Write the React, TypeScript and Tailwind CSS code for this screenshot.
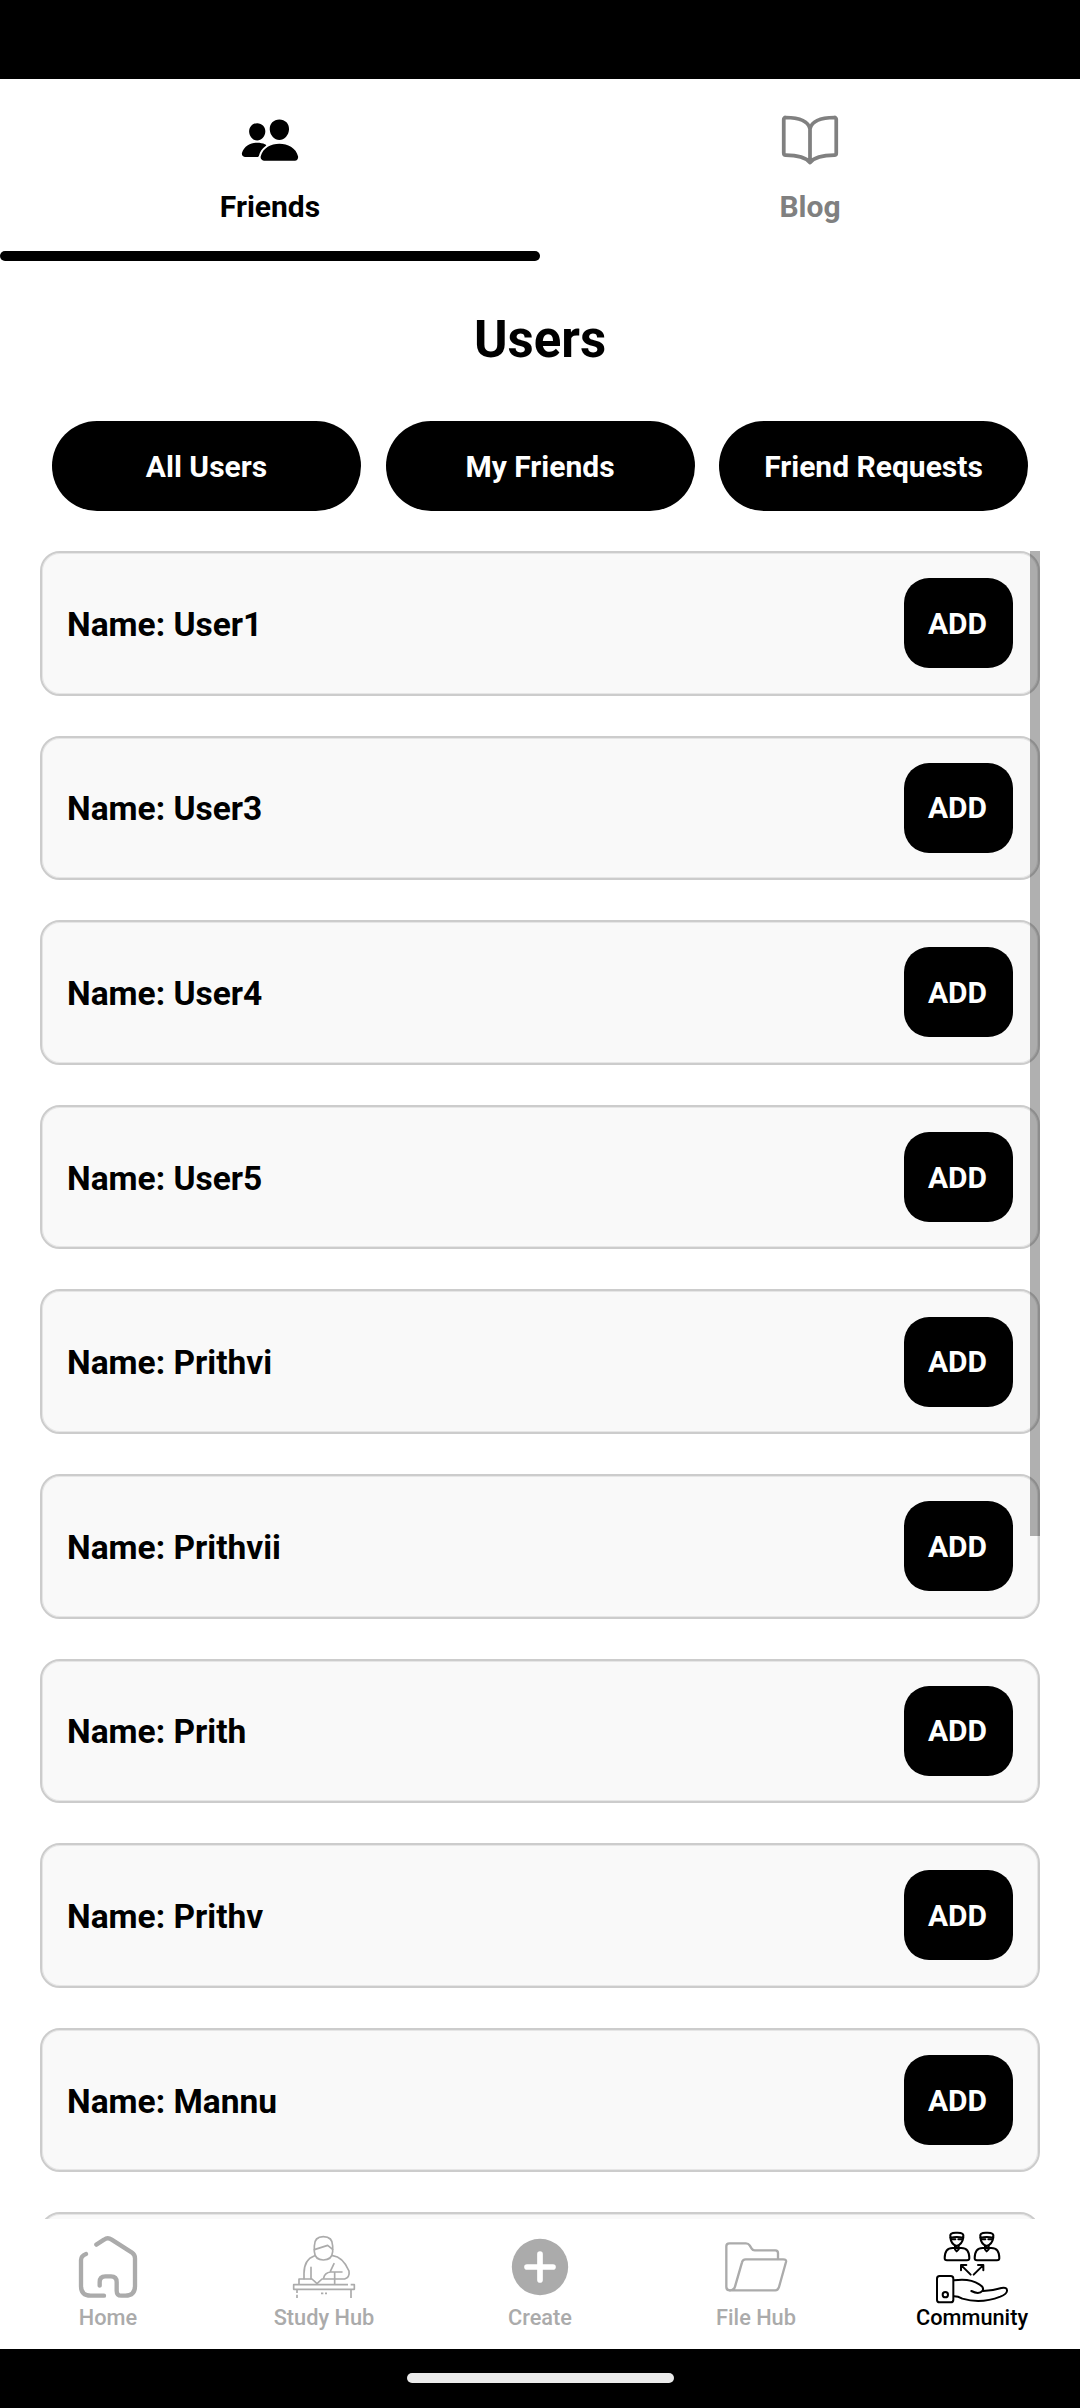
import React from "react";
import { IoBookOutline, IoPeople } from "react-icons/io5";

const users = [
    "User1",
    "User3",
    "User4",
    "User5",
    "Prithvi",
    "Prithvii",
    "Prith",
    "Prithv",
    "Mannu",
];

const filters = ["All Users", "My Friends", "Friend Requests"];

interface NavIconProps {
    viewBox: string;
    strokeWidth: number;
    children: React.ReactNode;
}

function NavIcon({ viewBox, strokeWidth, children }: NavIconProps) {
    return (
        <svg
            className="w-[90px] h-[84px]"
            viewBox={viewBox}
            fill="none"
            stroke="currentColor"
            strokeWidth={strokeWidth}
            strokeLinecap="round"
            strokeLinejoin="round"
        >
            {children}
        </svg>
    );
}

function HomeIcon() {
    return (
        <NavIcon viewBox="189 90 270 252" strokeWidth={13}>
            <path d="M289 164L312 149Q323 141 335 149L396 188Q405 194 405 205V288Q405 317 376 317H364Q350 317 350 302V276Q350 259 333 259H316Q299 259 299 276V287" />
            <path d="M258 192Q243 198 243 210V288Q243 317 272 317H312" />
        </NavIcon>
    );
}

function StudyIcon() {
    return (
        <NavIcon viewBox="837 90 270 252" strokeWidth={5}>
            <path d="M943 168Q943 140 970 140Q998 140 998 168V185Q996 210 970 210Q945 210 943 185Z" />
            <path d="M943 179L983 166L998 178" />
            <path d="M944 197Q912 208 912 250V266M933 232V266" />
            <path d="M998 197Q1028 200 1047 243Q1050 262 1034 267H966L951 281L936 267H897V281" />
            <path d="M1002 221L991 244M1026 246H992Q974 248 971 264M1004 246V281" />
            <path d="M1044 284H881V298H1063V284H1052" strokeLinecap="butt" />
            <path d="M891 300V309M891 314V324M1053 298V324M963 310H970M975 310H981" strokeLinecap="butt" />
        </NavIcon>
    );
}

function CreateIcon() {
    return (
        <NavIcon viewBox="285 90 270 252" strokeWidth={17}>
            <circle cx="420" cy="231" r="84.5" fill="currentColor" stroke="none" />
            <path d="M420 192V270M381 231H459" stroke="white" />
        </NavIcon>
    );
}

function FileIcon() {
    return (
        <NavIcon viewBox="933 90 270 252" strokeWidth={7}>
            <path d="M990 301Q979 301 979 291V169Q979 160 988 160H1038Q1045 160 1049 166L1055 176Q1058 181 1064 181H1126Q1134 181 1134 189V207" />
            <path d="M990 301Q1002 301 1005 290L1026 217Q1028 208 1037 208H1150Q1160 208 1158 216L1137 291Q1134 301 1126 301Z" />
        </NavIcon>
    );
}

function Person() {
    return (
        <>
            <path d="M512 143Q506 127 530 128Q555 127 549 143Q530 139 512 143Z" />
            <path d="M511 143Q513 163 530 168Q547 163 550 143M515 148H526M535 148H546" />
            <path d="M525 168V178L530 184L536 178V168" />
            <path d="M494 205Q494 174 518 174H544Q568 174 568 205Q568 211 561 211H501Q494 211 494 205Z" />
        </>
    );
}

function CommunityIcon() {
    return (
        <NavIcon viewBox="441 90 270 252" strokeWidth={6}>
            <Person />
            <g transform="translate(90 0)">
                <Person />
            </g>
            <path d="M572 254L544 226M543 241V225H559M581 254L609 226M594 225H610V241" />
            <rect x="471" y="258" width="49" height="79" rx="8" />
            <circle cx="496" cy="314" r="8" />
            <path d="M522 271Q569 264 598 283Q613 292 608 302Q597 315 574 303" />
            <path d="M609 303Q641 301 664 294Q682 290 681 303Q680 312 661 320Q602 343 547 326Q534 319 522 319" />
        </NavIcon>
    );
}

const navItems = [
    { label: "Home", icon: <HomeIcon /> },
    { label: "Study Hub", icon: <StudyIcon /> },
    { label: "Create", icon: <CreateIcon /> },
    { label: "File Hub", icon: <FileIcon /> },
    { label: "Community", icon: <CommunityIcon />, active: true },
];

function Card({ children }: { children?: React.ReactNode }) {
    return (
        <div className="h-[144.6px] shrink-0 flex items-center justify-between px-[25px] bg-[#f9f9f9] border-2 border-[#ccc] rounded-[20px] shadow-[inset_0_0_0_1px_#e6e6e6]">
            {children}
        </div>
    );
}

export default function App() {
    return (
        <div className="w-[1080px] h-[2408px] flex flex-col bg-white text-black font-[Roboto,sans-serif] overflow-hidden">
            {/* Status bar */}
            <div className="h-[79px] shrink-0 bg-black" />

            {/* Top tabs */}
            <div className="h-[182px] shrink-0 flex">
                <div className="w-1/2 flex flex-col items-center pt-[31px] relative">
                    <IoPeople className="w-[60px] h-[60px]" />
                    <span className="mt-[19px] text-[30px] font-bold leading-[36px]">Friends</span>
                    <div className="absolute bottom-0 left-0 w-full h-[10px] rounded-full bg-black" />
                </div>
                <div className="w-1/2 flex flex-col items-center pt-[31px] text-[#808080]">
                    <IoBookOutline className="w-[60px] h-[60px]" />
                    <span className="mt-[19px] text-[30px] font-bold leading-[36px]">Blog</span>
                </div>
            </div>

            <h1 className="h-[60px] shrink-0 mt-[49px] text-center text-[51px] font-bold leading-[60px]">Users</h1>

            {/* Filters */}
            <div className="shrink-0 mt-[51px] px-[52px] flex justify-between">
                {filters.map((filter) => (
                    <button
                        key={filter}
                        className="w-[309px] h-[90px] pt-[2px] rounded-full bg-black text-white text-[30px] font-bold leading-[36px]"
                    >
                        {filter}
                    </button>
                ))}
            </div>

            {/* User list */}
            <div className="h-[1668px] shrink-0 mt-[40px] mx-[40px] flex flex-col gap-[40px] overflow-hidden relative">
                {users.map((name) => (
                    <Card key={name}>
                        <span className="pt-[3px] text-[33.5px] font-bold leading-[42px]">Name: {name}</span>
                        <button className="w-[109px] h-[90px] pt-px pr-[2px] rounded-[25px] bg-black text-white text-[30px] font-bold leading-[36px]">
                            ADD
                        </button>
                    </Card>
                ))}
                <Card />
                <div className="absolute top-0 right-0 w-[10px] h-[985px] bg-black/31" />
            </div>

            {/* Bottom navigation */}
            <nav className="h-[130px] shrink-0 pt-px flex bg-white">
                {navItems.map((item) => (
                    <div
                        key={item.label}
                        className={`w-1/5 flex flex-col items-center ${item.active ? "text-black" : "text-[#ababab]"}`}
                    >
                        {item.icon}
                        <span className="text-[21.75px] font-medium leading-[28px]">{item.label}</span>
                    </div>
                ))}
            </nav>

            {/* Gesture bar */}
            <div className="h-[59px] shrink-0 pt-[24px] flex justify-center bg-black">
                <div className="w-[267px] h-[10px] rounded-full bg-[#ebebeb]" />
            </div>
        </div>
    );
}
